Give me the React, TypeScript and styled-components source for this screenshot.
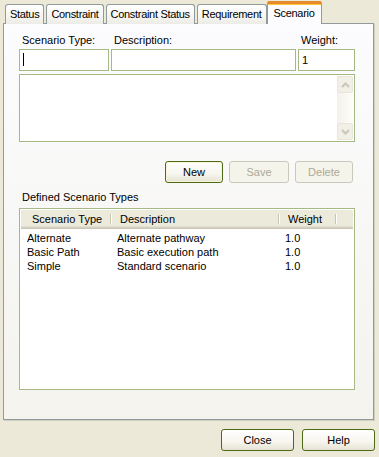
import React from 'react';
import styled, { createGlobalStyle, css } from 'styled-components';

const FONT = `'Liberation Sans', Arial, sans-serif`;

const GlobalStyle = createGlobalStyle`
    html, body {
        margin: 0;
        padding: 0;
        background: #ece9d8;
    }
    body {
        font-family: ${FONT};
        font-size: 11px;
        color: #000;
    }
`;

const Page = styled.div`
    width: 379px;
    height: 457px;
    box-sizing: border-box;
    padding: 2px 4px 0 3px;
    display: flex;
    flex-direction: column;
`;

const TabStrip = styled.div`
    display: flex;
    align-items: flex-end;
    gap: 2px;
    height: 22px;
    padding-left: 2px;
    position: relative;
    z-index: 1;
    margin-bottom: -1px;
`;

const Tab = styled.div<{ $active?: boolean }>`
    box-sizing: border-box;
    height: 20px;
    padding: 3px 4px 0;
    letter-spacing: -0.3px;
    border: 1px solid #919b9c;
    border-bottom: none;
    border-radius: 3px 3px 0 0;
    background: linear-gradient(#ffffff, #f3f3ef 70%, #ecebe5);
    white-space: nowrap;
    ${({ $active }) =>
        $active &&
        css`
            height: 23px;
            margin: 0 -1px 0 -2px;
            padding: 3px 6px 0;
            border-top: 3px solid #e68b2c;
            box-shadow: inset 0 1px 0 #ffc73c;
            background: #fcfcfe;
            border-radius: 2px 2px 0 0;
        `}
`;

const Panel = styled.div`
    box-sizing: border-box;
    height: 397px;
    margin-right: 1px;
    border: 1px solid #919b9c;
    box-shadow: 1px 1px 0 #d0cebf;
    background: linear-gradient(#fcfcfe, #f4f3ee);
    padding: 10px 18px 0 15px;
    display: flex;
    flex-direction: column;
`;

const FieldGrid = styled.div`
    display: grid;
    grid-template-columns: 90px 185px 57px;
    column-gap: 2px;
    row-gap: 2px;
`;

const FieldLabel = styled.label`
    line-height: 13px;
    padding-left: 3px;
`;

const TextBox = styled.div`
    box-sizing: border-box;
    height: 22px;
    border: 1px solid #a5b984;
    background: #fff;
    padding: 3px 3px 0;
    line-height: 14px;
`;

const Caret = styled.span`
    display: inline-block;
    width: 1px;
    height: 13px;
    background: #000;
    vertical-align: top;
`;

const Memo = styled.div`
    box-sizing: border-box;
    height: 68px;
    margin-top: 3px;
    border: 1px solid #a5b984;
    background: #fff;
    display: flex;
    justify-content: flex-end;
    padding: 1px;
`;

const ScrollBar = styled.div`
    width: 16px;
    display: flex;
    flex-direction: column;
    justify-content: space-between;
    background: linear-gradient(90deg, #f3f1ea, #fdfdfa);
`;

const ScrollButton = styled.div`
    box-sizing: border-box;
    height: 17px;
    border: 1px solid #e8e6dc;
    border-radius: 2px;
    background: #f1efe6;
    display: flex;
    align-items: center;
    justify-content: center;
`;

const ButtonRow = styled.div`
    display: flex;
    justify-content: flex-end;
    gap: 6px;
    margin-top: 19px;
    padding-right: 2px;
`;

const Button = styled.button<{ $default?: boolean; $width?: number }>`
    box-sizing: border-box;
    width: ${({ $width }) => $width ?? 59}px;
    height: 22px;
    font-family: ${FONT};
    font-size: 11px;
    color: #000;
    border: 1px solid #4d6a17;
    border-radius: 3px;
    background: linear-gradient(#ffffff, #f6f5ee 60%, #e6e3d4);
    padding: 0;
    ${({ $default }) =>
        $default &&
        css`
            box-shadow: inset 0 0 0 1px #f9f4d6;
        `}
    &:disabled {
        color: #aca899;
        border-color: #cac8bb;
        background: #f5f4ea;
    }
`;

const SectionLabel = styled.div`
    margin-top: 8px;
    padding-left: 3px;
    line-height: 13px;
`;

const ListBox = styled.div`
    box-sizing: border-box;
    height: 182px;
    margin-top: 4px;
    border: 1px solid #a5b984;
    background: #fff;
    padding: 1px;
`;

const COLUMNS = '90px 168px 57px 1fr';

const HeaderRow = styled.div`
    display: grid;
    grid-template-columns: ${COLUMNS};
    height: 19px;
    box-sizing: border-box;
    background: #ebeadb;
    box-shadow: inset 0 -1px 0 #cbc7b8, inset 0 -2px 0 #d6d2c2, inset 0 -3px 0 #e2decd;
`;

const HeaderCell = styled.div<{ $pad?: number; $last?: boolean }>`
    padding-left: ${({ $pad }) => $pad ?? 9}px;
    line-height: 18px;
    position: relative;
    ${({ $last }) =>
        !$last &&
        css`
            &::after {
                content: '';
                position: absolute;
                right: 0;
                top: 4px;
                bottom: 5px;
                width: 1px;
                background: #c7c5b2;
                box-shadow: 1px 0 0 #fff;
            }
        `}
`;

const Rows = styled.div`
    padding-top: 2px;
`;

const Row = styled.div`
    display: grid;
    grid-template-columns: ${COLUMNS};
    height: 14px;
    line-height: 14px;
`;

const Cell = styled.div`
    padding-left: 6px;
    white-space: nowrap;
`;

const Footer = styled.div`
    display: flex;
    justify-content: flex-end;
    gap: 8px;
    margin-top: 9px;
`;

const Chevron = ({ up }: { up?: boolean }) => (
    <svg width="9" height="6" viewBox="0 0 9 6">
        <path
            d={up ? 'M1 5 L4.5 1.5 L8 5' : 'M1 1 L4.5 4.5 L8 1'}
            fill="none"
            stroke="#c9c7ba"
            strokeWidth="2"
        />
    </svg>
);

const tabs = ['Status', 'Constraint', 'Constraint Status', 'Requirement', 'Scenario'];

const scenarios = [
    { type: 'Alternate', description: 'Alternate pathway', weight: '1.0' },
    { type: 'Basic Path', description: 'Basic execution path', weight: '1.0' },
    { type: 'Simple', description: 'Standard scenario', weight: '1.0' },
];

export default function App() {
    return (
        <Page>
            <GlobalStyle />
            <TabStrip>
                {tabs.map(t => (
                    <Tab key={t} $active={t === 'Scenario'}>
                        {t}
                    </Tab>
                ))}
            </TabStrip>
            <Panel>
                <FieldGrid>
                    <FieldLabel>Scenario Type:</FieldLabel>
                    <FieldLabel>Description:</FieldLabel>
                    <FieldLabel>Weight:</FieldLabel>
                    <TextBox>
                        <Caret />
                    </TextBox>
                    <TextBox />
                    <TextBox>1</TextBox>
                </FieldGrid>
                <Memo>
                    <ScrollBar>
                        <ScrollButton>
                            <Chevron up />
                        </ScrollButton>
                        <ScrollButton>
                            <Chevron />
                        </ScrollButton>
                    </ScrollBar>
                </Memo>
                <ButtonRow>
                    <Button $default $width={58}>New</Button>
                    <Button disabled $width={60}>Save</Button>
                    <Button disabled $width={58}>Delete</Button>
                </ButtonRow>
                <SectionLabel>Defined Scenario Types</SectionLabel>
                <ListBox>
                    <HeaderRow>
                        <HeaderCell $pad={11}>Scenario Type</HeaderCell>
                        <HeaderCell>Description</HeaderCell>
                        <HeaderCell>Weight</HeaderCell>
                        <HeaderCell $last />
                    </HeaderRow>
                    <Rows>
                        {scenarios.map(s => (
                            <Row key={s.type}>
                                <Cell>{s.type}</Cell>
                                <Cell>{s.description}</Cell>
                                <Cell>{s.weight}</Cell>
                                <Cell />
                            </Row>
                        ))}
                    </Rows>
                </ListBox>
            </Panel>
            <Footer>
                <Button $width={73}>Close</Button>
                <Button $width={73}>Help</Button>
            </Footer>
        </Page>
    );
}
